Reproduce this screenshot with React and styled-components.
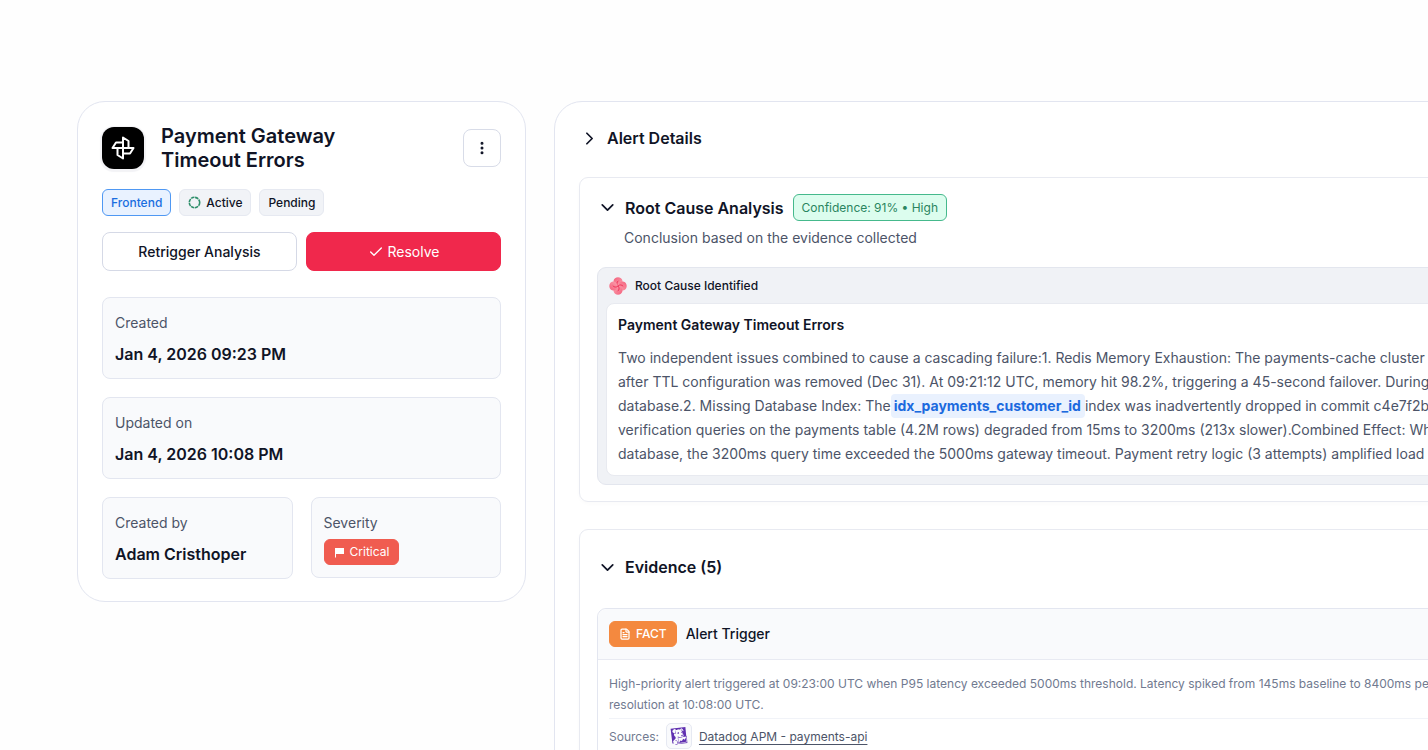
import React from 'react'
import styled, { createGlobalStyle, css } from 'styled-components'
import { Check, ChevronDown, ChevronRight, EllipsisVertical, FileText } from 'lucide-react'
import { SiDatadog } from 'react-icons/si'

const GlobalStyle = createGlobalStyle`
*{
    box-sizing: border-box;
}
body{
    margin: 0;
    background: #fefefe;
    color: #101426;
    font-family: Inter, "Liberation Sans", sans-serif;
    font-size: 14px;
    line-height: 24px;
}
h1, h2, h3, p, dl, dt, dd{
    margin: 0;
}
button{
    font-family: inherit;
    color: inherit;
    cursor: pointer;
}
svg{
    flex: none;
}
`

const Page = styled.main`
display: flex;
align-items: flex-start;
column-gap: 28px;
height: 100vh;
padding: 101px 0 0 77px;
overflow: hidden;
`

const Card = styled.aside`
flex: 0 0 449px;
padding: 24px 24px 22px;
border: 1px solid #e2e5f0;
border-radius: 28px;
background: #fff;
`

const CardHeader = styled.header`
display: flex;
align-items: center;
height: 44px;
margin-bottom: 19px;
h1{
    flex: 1;
    max-width: 200px;
    margin-left: 17px;
    font-size: 20px;
    font-weight: 600;
}
`

const Logo = styled.div`
display: flex;
align-items: center;
justify-content: center;
width: 42px;
height: 42px;
border-radius: 12px;
background: #000;
box-shadow: 0 1px 1px 2px #f3f3f6;
`

const MenuButton = styled.button`
display: flex;
align-items: center;
justify-content: center;
width: 38px;
height: 38px;
margin-left: auto;
padding: 0;
border: 1px solid #d8dce8;
border-radius: 8px;
background: #fff;
`

const tones = {
    blue: css`
        color: #1a6ee0;
        background: #e9f2ff;
        border-color: #4f98f3;
    `,
    grey: css`
        color: #101426;
        background: #f1f3f7;
        border-color: #e6e9f1;
    `,
    green: css`
        color: #2a8560;
        background: #dcfdee;
        border-color: #45b98c;
    `,
    red: css`
        color: #fff;
        background: #f05c50;
        border-color: #f05c50;
    `,
    orange: css`
        color: #fff;
        background: #f4893f;
        border-color: #f4893f;
    `,
}

const Tag = styled.span`
display: inline-flex;
align-items: center;
column-gap: 5px;
height: ${({ $small }) => ($small ? 26 : 27)}px;
padding: 0 ${({ $small }) => ($small ? 9 : 8)}px;
border: 1px solid;
border-radius: 6px;
font-size: 12px;
font-weight: ${({ $medium }) => ($medium ? 500 : 400)};
line-height: 16px;
white-space: nowrap;
${({ $tone }) => tones[$tone]}
`

const Tags = styled.div`
display: flex;
column-gap: 8px;
margin-bottom: 16px;
`

const Actions = styled.div`
display: flex;
column-gap: 9px;
margin-bottom: 26px;
`

const Button = styled.button`
display: flex;
flex: 1;
align-items: center;
justify-content: center;
column-gap: 4px;
height: 39px;
border: 1px solid ${({ $primary }) => ($primary ? '#f0284c' : '#d5d9e6')};
border-radius: 8px;
background: ${({ $primary }) => ($primary ? '#f0284c' : '#fff')};
color: ${({ $primary }) => ($primary ? '#fff' : '#101426')};
font-size: 14px;
font-weight: ${({ $primary }) => ($primary ? 400 : 500)};
`

const Fields = styled.dl`
display: grid;
grid-template-columns: 1fr 1fr;
gap: 18px;
align-items: start;
`

const Field = styled.div`
grid-column: ${({ $wide }) => ($wide ? '1 / -1' : 'auto')};
padding: 13px 12px 12px;
border: 1px solid #e3e6f0;
border-radius: 8px;
background: #f9fafc;
dt{
    color: #4c5468;
}
dd{
    margin-top: 7px;
    font-size: 16px;
    font-weight: 600;
}
`

const Severity = styled(Field)`
dd{
    display: flex;
    margin-top: 4px;
    font-weight: 400;
}
`

const Panel = styled.section`
flex: 0 0 90vw;
padding: 24px;
border: 1px solid #e2e5f0;
border-radius: 28px;
background: #fff;
`

const Section = styled.section`
margin-top: 27px;
padding: 16px 17px;
border: 1px solid #e8eaf1;
border-radius: 9px;
box-shadow: 0 2px 4px rgba(16, 20, 38, 0.02);
`

const SectionHeader = styled.div`
display: flex;
align-items: center;
column-gap: 9px;
min-height: ${({ $tall }) => ($tall ? 42 : 24)}px;
h2{
    font-size: 16px;
    line-height: 24px;
}
`

const Toggle = styled.button`
display: flex;
align-items: center;
column-gap: 7px;
padding: 0;
border: 0;
background: none;
font-size: 16px;
font-weight: 600;
line-height: 24px;
`

const Subtitle = styled.p`
margin-top: 5px;
padding-left: 27px;
color: #4c5468;
`

const Finding = styled.div`
margin-top: 17px;
padding: 0 8px 8px;
border: 1px solid #e3e6ee;
border-radius: 9px;
background: #f0f2f6;
`

const FindingLabel = styled.div`
display: flex;
align-items: center;
column-gap: 8px;
height: 35px;
padding-left: 3px;
font-size: 12px;
font-weight: 500;
`

const FindingBody = styled.article`
display: flex;
flex-direction: column;
row-gap: 9px;
padding: 9px 11px;
border: 1px solid #e8eaf0;
border-radius: 8px;
background: #fff;
h3{
    font-size: 14px;
    font-weight: 600;
}
p{
    color: #4c5468;
    white-space: nowrap;
}
`

const Line = styled.span`
display: flex;
`

const Code = styled.mark`
padding: 0 4px 0 3px;
border-radius: 4px;
background: #e9f1fe;
color: #1b6ade;
font-weight: 700;
`

const Evidence = styled.article`
margin-top: 20px;
border: 1px solid #e3e6f0;
border-radius: 9px;
`

const EvidenceHeader = styled.header`
display: flex;
align-items: center;
column-gap: 9px;
height: 51px;
padding: 0 11px;
border-bottom: 1px solid #e8eaf2;
border-radius: 9px 9px 0 0;
background: #f9fafc;
h3{
    font-size: 14px;
    font-weight: 500;
}
`

const EvidenceBody = styled.div`
padding: 13px 11px;
color: #717a90;
font-size: 12px;
line-height: 21px;
p{
    white-space: nowrap;
}
`

const Sources = styled.div`
display: flex;
align-items: center;
column-gap: 7px;
margin-top: 3px;
padding-top: 4px;
border-top: 1px solid #f1f3f8;
a{
    color: #4c5468;
    text-underline-offset: 3px;
}
`

const SourceIcon = styled.span`
display: flex;
align-items: center;
justify-content: center;
width: 26px;
height: 26px;
border: 1px solid #e6e9f2;
border-radius: 5px;
background: #f9fafc;
`

const PinwheelLogo = () => (
    <svg width='24' height='24' viewBox='0 0 24 24' fill='none' stroke='#fff' strokeWidth='2' strokeLinejoin='round' aria-hidden='true'>
        {[0, 90, 180, 270].map(angle => (
            <path key={angle} d='M12 1.5 17.5 5V12H12Z' transform={`rotate(${angle} 12 12)`} />
        ))}
    </svg>
)

const Petals = () => (
    <svg width='18' height='18' viewBox='0 0 18 18' aria-hidden='true'>
        <defs>
            <linearGradient id='petal' x1='0' y1='0' x2='1' y2='1'>
                <stop offset='0' stopColor='#f4607c' />
                <stop offset='1' stopColor='#fba3b0' />
            </linearGradient>
        </defs>
        {[0, 90, 180, 270].map(angle => (
            <g key={angle} transform={`rotate(${angle} 9 9)`}>
                <path d='M9 9C5.500 8 4.200 6 4.500 4 4.900 1.600 6.800 .3 9 .3s4.100 1.300 4.500 3.700C13.800 6 12 8 9 9Z' fill='url(#petal)' />
                <path d='M9 9C7.400 7.200 7.600 5 9.400 3.800' fill='none' stroke='#f0345a' strokeWidth='1' />
            </g>
        ))}
    </svg>
)

const StatusRing = () => (
    <svg width='13' height='13' viewBox='0 0 13 13' fill='none' aria-hidden='true'>
        <circle cx='6.5' cy='6.5' r='5.2' stroke='#2f8f6b' strokeWidth='1.6' strokeDasharray='3.4 0.684' />
    </svg>
)

const Flag = () => (
    <svg width='11' height='11' viewBox='0 0 11 11' fill='#fff' aria-hidden='true'>
        <path d='M1 1h9v6H2v3.500H1Z' />
    </svg>
)

function App() {
    return (
        <Page>
            <GlobalStyle />
            <Card>
                <CardHeader>
                    <Logo><PinwheelLogo /></Logo>
                    <h1>Payment Gateway Timeout Errors</h1>
                    <MenuButton type='button' aria-label='More actions'>
                        <EllipsisVertical size={16} strokeWidth={2.5} />
                    </MenuButton>
                </CardHeader>
                <Tags>
                    <Tag $tone='blue' $medium>Frontend</Tag>
                    <Tag $tone='grey' $medium><StatusRing />Active</Tag>
                    <Tag $tone='grey' $medium>Pending</Tag>
                </Tags>
                <Actions>
                    <Button type='button'>Retrigger Analysis</Button>
                    <Button type='button' $primary><Check size={16} strokeWidth={2} />Resolve</Button>
                </Actions>
                <Fields>
                    <Field $wide>
                        <dt>Created</dt>
                        <dd>Jan 4, 2026 09:23 PM</dd>
                    </Field>
                    <Field $wide>
                        <dt>Updated on</dt>
                        <dd>Jan 4, 2026 10:08 PM</dd>
                    </Field>
                    <Field>
                        <dt>Created by</dt>
                        <dd>Adam Cristhoper</dd>
                    </Field>
                    <Severity>
                        <dt>Severity</dt>
                        <dd><Tag $tone='red' $small><Flag />Critical</Tag></dd>
                    </Severity>
                </Fields>
            </Card>

            <Panel>
                <SectionHeader>
                    <h2>
                        <Toggle type='button' aria-expanded='false'>
                            <ChevronRight size={21} strokeWidth={2} />Alert Details
                        </Toggle>
                    </h2>
                </SectionHeader>

                <Section>
                    <SectionHeader>
                        <h2>
                            <Toggle type='button' aria-expanded='true'>
                                <ChevronDown size={21} strokeWidth={2} />Root Cause Analysis
                            </Toggle>
                        </h2>
                        <Tag $tone='green'>Confidence: 91% • High</Tag>
                    </SectionHeader>
                    <Subtitle>Conclusion based on the evidence collected</Subtitle>
                    <Finding>
                        <FindingLabel><Petals />Root Cause Identified</FindingLabel>
                        <FindingBody>
                            <h3>Payment Gateway Timeout Errors</h3>
                            <p>
                                <Line>Two independent issues combined to cause a cascading failure:1. Redis Memory Exhaustion: The payments-cache cluster</Line>
                                <Line>after TTL configuration was removed (Dec 31). At 09:21:12 UTC, memory hit 98.2%, triggering a 45-second failover. During</Line>
                                <Line>
                                    <span>database.2. Missing Database Index: The</span>
                                    <Code>idx_payments_customer_id</Code>
                                    <span>index was inadvertently dropped in commit c4e7f2b</span>
                                </Line>
                                <Line>verification queries on the payments table (4.2M rows) degraded from 15ms to 3200ms (213x slower).Combined Effect: When</Line>
                                <Line>database, the 3200ms query time exceeded the 5000ms gateway timeout. Payment retry logic (3 attempts) amplified load</Line>
                            </p>
                        </FindingBody>
                    </Finding>
                </Section>

                <Section>
                    <SectionHeader $tall>
                        <h2>
                            <Toggle type='button' aria-expanded='true'>
                                <ChevronDown size={21} strokeWidth={2} />Evidence (5)
                            </Toggle>
                        </h2>
                    </SectionHeader>
                    <Evidence>
                        <EvidenceHeader>
                            <Tag $tone='orange' $small $medium><FileText size={12} strokeWidth={2.5} />FACT</Tag>
                            <h3>Alert Trigger</h3>
                        </EvidenceHeader>
                        <EvidenceBody>
                            <p>
                                <Line>High-priority alert triggered at 09:23:00 UTC when P95 latency exceeded 5000ms threshold. Latency spiked from 145ms baseline to 8400ms peak</Line>
                                <Line>resolution at 10:08:00 UTC.</Line>
                            </p>
                            <Sources>
                                Sources:
                                <SourceIcon><SiDatadog size={18} color='#5f2fb0' /></SourceIcon>
                                <a href='#datadog-apm'>Datadog APM - payments-api</a>
                            </Sources>
                        </EvidenceBody>
                    </Evidence>
                </Section>
            </Panel>
        </Page>
    )
}

export default App
